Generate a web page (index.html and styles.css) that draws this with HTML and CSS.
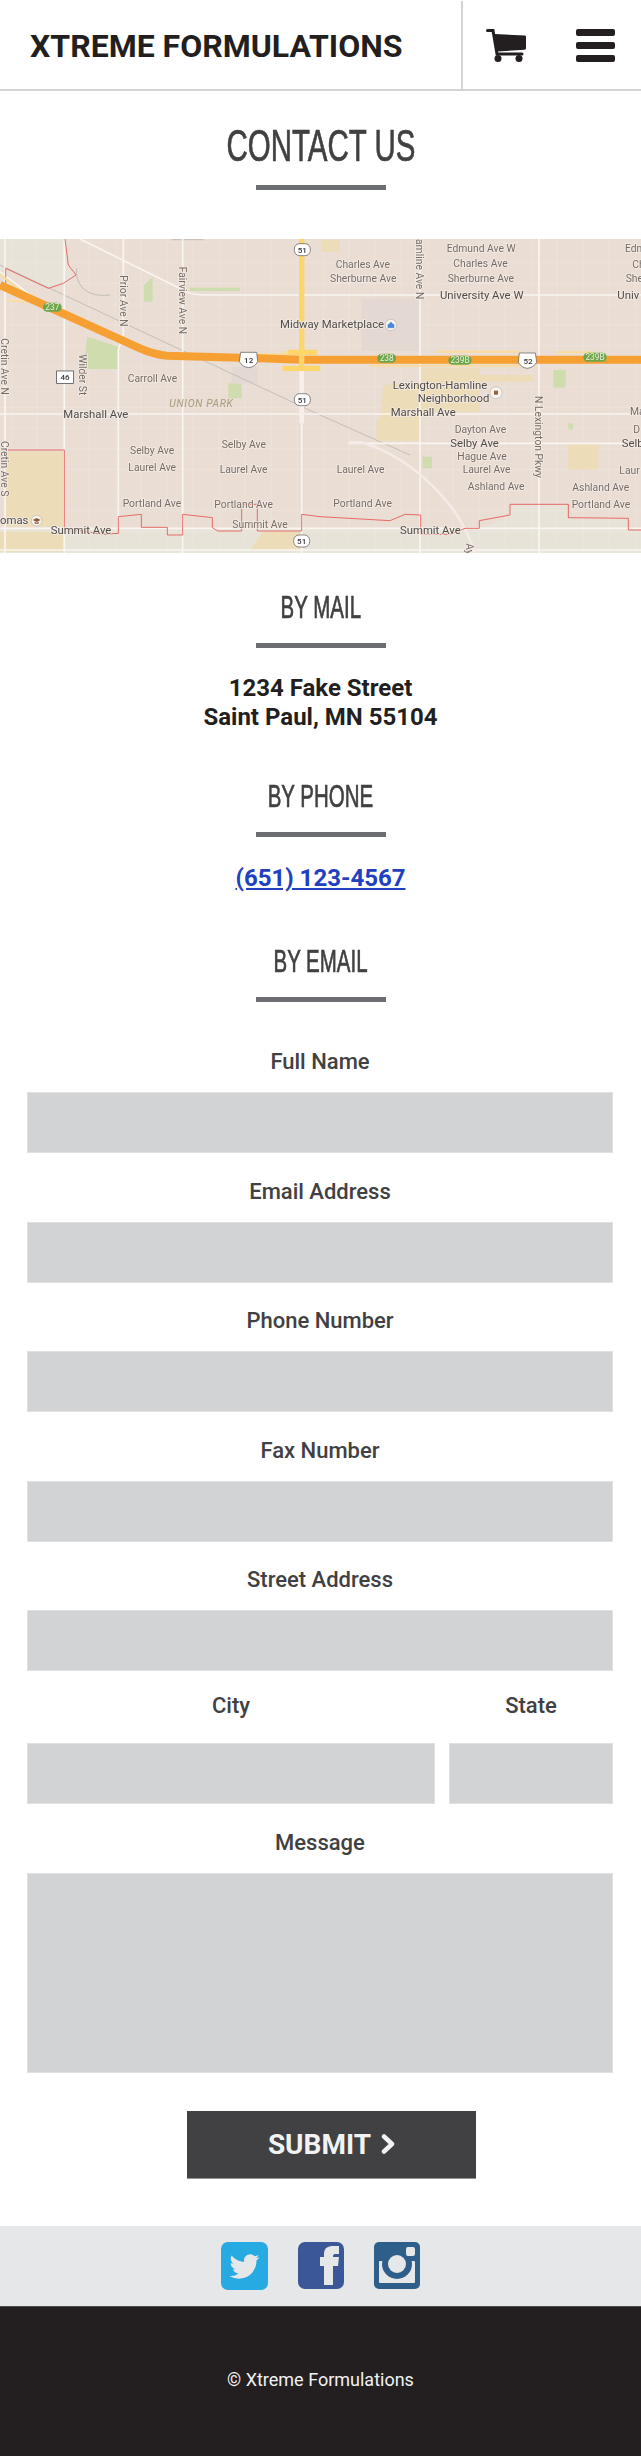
FILE: index.html
```html
<!DOCTYPE html>
<html lang="en">
<head>
    <meta charset="UTF-8">
    <meta name="viewport" content="width=device-width, initial-scale=1.0">
    <title>Contact Us - Xtreme Formulations</title>
    <link rel="stylesheet" href="styles.css">
</head>
<body>
    <header class="site-header">
        <div class="brand">XTREME FORMULATIONS</div>
        <div class="header-icons">
            <svg class="cart-icon" width="40" height="33" viewBox="0 0 40 33">
                <path class="cart-line" d="M1.5 1.5H7L11 25H36"/>
                <path d="M8.5 5L39 6.5Q40 6.5 40 8V19Q40 20.5 38.5 20.7L11.5 22.5Z"/>
                <circle cx="12" cy="29.5" r="3.5"/>
                <circle cx="33" cy="29.5" r="3.5"/>
            </svg>
            <div class="menu-icon"><span></span><span></span><span></span></div>
        </div>
    </header>

    <main>
        <h1 class="page-title"><span>CONTACT US</span></h1>
        <div class="rule"></div>

        <!-- static drawing of the map, coordinates are 3x the screen size -->
        <svg class="map" width="641" height="314" viewBox="0 12 1923 942">
            <defs>
                <pattern id="blocks" width="78" height="62" patternUnits="userSpaceOnUse" patternTransform="translate(32 20)">
                    <path class="block-line" d="M0 0V62M0 0H78"/>
                </pattern>
            </defs>
            <rect class="land" x="0" y="12" width="1923" height="942"/>
            <path class="outside" d="M0 12H195L205 90L228 120L190 145L145 160L17 100L0 110Z"/>
            <path class="outside" d="M0 880H1923V954H0Z"/>
            <path class="outside" d="M1530 808H1705V850L1885 850V885H1440L1530 840Z"/>
            <rect class="grid" x="0" y="12" width="1923" height="942"/>

            <path class="park" d="M262 305L355 335V402H250Z"/>
            <rect class="park" x="685" y="445" width="40" height="45"/>
            <path class="park" d="M432 150L458 125V200H432Z"/>
            <rect class="park" x="570" y="158" width="150" height="10"/>
            <rect class="park" x="1660" y="405" width="37" height="53"/>
            <rect class="park" x="1268" y="665" width="28" height="35"/>
            <rect class="park" x="1705" y="565" width="14" height="18"/>
            <rect class="campus" x="18" y="650" width="172" height="225"/>
            <rect class="campus" x="0" y="890" width="190" height="60"/>
            <rect class="campus" x="1705" y="628" width="90" height="75"/>
            <rect class="campus" x="965" y="15" width="55" height="35"/>
            <path class="campus" d="M750 945L790 890H900V945Z"/>
            <path class="campus" d="M1265 400H1440V440H1600V420H1440V530H1265V618H1130V555H1140L1150 450L1265 440Z"/>
            <rect class="mall" x="1085" y="190" width="175" height="158"/>
            <rect class="mall" x="695" y="395" width="78" height="50"/>

            <path class="rail" d="M0 90L960 540"/>
            <path class="rail" d="M230 100C225 140 250 190 330 180"/>
            <path class="rail" d="M960 540L1230 660"/>
            <path class="rail" d="M515 14H610"/>

            <path class="road" d="M15 12V954M193 12V954M370 12V300L355 345V880M548 12V954M905 400V954M1260 12V954M1617 12V954"/>
            <path class="road" d="M0 537H960M960 537H1923M1045 625H1923M0 880H1923M0 945H1923"/>
            <path class="road" d="M240 12L560 170Q575 180 620 180H1923"/>
            <path class="road" d="M20 195L120 200M0 110L130 210"/>
            <path class="road-wide" d="M905 400V565"/>
            <path class="road-curve" d="M1050 622H1085C1210 660 1370 780 1425 954"/>

            <path class="border-line" d="M195 12L205 90L228 120L190 145L145 160L17 100L17 145"/>
            <path class="border-line" d="M15 645H193V880L310 898L355 895V845L424 838V877H502V900H548V838L637 848V878L653 888H725V808H772V888H905V838L960 845L1170 857L1215 838L1262 840V898H1350L1395 880H1438V857L1530 840V808H1705V848L1885 850V885H1923"/>

            <path class="ramp" d="M0 118L100 195M20 195L130 205M775 358H950M850 352H950M845 400H960M1310 350H1560M1110 392H1560M1670 352H1780"/>
            <path class="freeway" d="M0 150L420 340Q460 358 500 362L720 368L905 374H1923"/>
            <path class="trunk" d="M905 12V400M865 352H950M848 400H960"/>

            <text class="label" x="372" y="121" transform="rotate(90 372 121)" dy="11">Prior Ave N</text>
            <text class="label" x="548" y="95" transform="rotate(90 548 95)" dy="11">Fairview Ave N</text>
            <text class="label" x="13" y="310" transform="rotate(90 13 310)" dy="11">Cretin Ave N</text>
            <text class="label" x="13" y="618" transform="rotate(90 13 618)" dy="11">Cretin Ave S</text>
            <text class="label" x="248" y="358" transform="rotate(90 248 358)" dy="11">Wilder St</text>
            <text class="label" x="1260" y="12" transform="rotate(90 1260 12)" dy="11">amline Ave N</text>
            <text class="label" x="1617" y="483" transform="rotate(90 1617 483)" dy="11">N Lexington Pkwy</text>
            <text class="label" x="1408" y="925" transform="rotate(90 1408 925)" dy="11">Ay</text>

            <text class="label" x="383" y="442">Carroll Ave</text>
            <text class="area" x="508" y="517">UNION PARK</text>
            <text class="label dark" x="190" y="548">Marshall Ave</text>
            <text class="label" x="390" y="657">Selby Ave</text>
            <text class="label" x="665" y="638">Selby Ave</text>
            <text class="label" x="385" y="708">Laurel Ave</text>
            <text class="label" x="659" y="714">Laurel Ave</text>
            <text class="label" x="368" y="817">Portland Ave</text>
            <text class="label" x="643" y="818">Portland Ave</text>
            <text class="label" x="697" y="880">Summit Ave</text>
            <text class="label dark" x="152" y="896">Summit Ave</text>
            <text class="label dark" x="0" y="868">omas</text>
            <text class="label dark" x="840" y="280">Midway</text>

            <text class="label" x="1340" y="51">Edmund Ave W</text>
            <text class="label" x="1875" y="51">Edm</text>
            <text class="label" x="1007" y="98">Charles Ave</text>
            <text class="label" x="1360" y="96">Charles Ave</text>
            <text class="label" x="1897" y="98">Ch</text>
            <text class="label" x="990" y="142">Sherburne Ave</text>
            <text class="label" x="1343" y="140">Sherburne Ave</text>
            <text class="label" x="1877" y="142">She</text>
            <text class="label dark" x="1320" y="192">University Ave W</text>
            <text class="label dark" x="1852" y="192">Univ</text>
            <text class="label dark" x="965" y="280">Marketplace</text>
            <text class="label dark" x="1178" y="463">Lexington-Hamline</text>
            <text class="label dark" x="1253" y="501">Neighborhood</text>
            <text class="label dark" x="1172" y="543">Marshall Ave</text>
            <text class="label" x="1890" y="540">Ma</text>
            <text class="label" x="1364" y="593">Dayton Ave</text>
            <text class="label" x="1900" y="595">D</text>
            <text class="label dark" x="1351" y="635">Selby Ave</text>
            <text class="label dark" x="1865" y="637">Selb</text>
            <text class="label" x="1372" y="675">Hague Ave</text>
            <text class="label" x="1010" y="713">Laurel Ave</text>
            <text class="label" x="1388" y="713">Laurel Ave</text>
            <text class="label" x="1858" y="716">Laur</text>
            <text class="label" x="1403" y="765">Ashland Ave</text>
            <text class="label" x="1717" y="768">Ashland Ave</text>
            <text class="label" x="1000" y="817">Portland Ave</text>
            <text class="label" x="1715" y="820">Portland Ave</text>
            <text class="label dark" x="1200" y="896">Summit Ave</text>

            <g class="route-51">
                <rect x="883" y="26" width="48" height="36" rx="16"/>
                <rect x="883" y="476" width="48" height="36" rx="16"/>
                <rect x="881" y="900" width="48" height="36" rx="16"/>
            </g>
            <text class="route-text" x="907" y="54">51</text>
            <text class="route-text" x="907" y="504">51</text>
            <text class="route-text" x="905" y="928">51</text>

            <path class="shield" d="M722 352H770L773 380Q765 396 746 398Q727 396 718 380Z"/>
            <text class="route-text" x="746" y="385">12</text>
            <path class="shield" d="M1558 354H1606L1610 382Q1600 398 1582 400Q1564 398 1555 382Z"/>
            <text class="route-text" x="1584" y="387">52</text>
            <rect class="state-route" x="170" y="408" width="50" height="37"/>
            <text class="route-text" x="195" y="436">46</text>

            <g class="exit">
                <rect x="129" y="203" width="56" height="27" rx="13"/>
                <rect x="1132" y="356" width="56" height="27" rx="13"/>
                <rect x="1345" y="362" width="70" height="27" rx="13"/>
                <rect x="1750" y="353" width="70" height="27" rx="13"/>
            </g>
            <text class="exit-text" x="157" y="225">237</text>
            <text class="exit-text" x="1160" y="378">238</text>
            <text class="exit-text" x="1380" y="384">239B</text>
            <text class="exit-text" x="1785" y="375">239B</text>

            <circle class="poi" cx="110" cy="857" r="16"/>
            <path class="poi-school" d="M98 855L110 849L122 855L110 861ZM104 860V866H116V860L110 863Z"/>
            <circle class="poi" cx="1173" cy="270" r="17"/>
            <path class="poi-shop" d="M1164 278V268H1182V278ZM1168 268Q1173 256 1178 268"/>
            <circle class="poi" cx="1488" cy="473" r="18"/>
            <rect class="poi-place" x="1482" y="467" width="12" height="12"/>
        </svg>

        <h2 class="section-title first"><span>BY MAIL</span></h2>
        <div class="rule"></div>
        <p class="contact-info address">1234 Fake Street<br>Saint Paul, MN 55104</p>

        <h2 class="section-title"><span>BY PHONE</span></h2>
        <div class="rule"></div>
        <p class="contact-info phone"><a href="#">(651) 123-4567</a></p>

        <h2 class="section-title"><span>BY EMAIL</span></h2>
        <div class="rule"></div>

        <form class="contact-form" onsubmit="return false">
            <label for="full-name">Full Name</label>
            <input type="text" id="full-name">

            <label for="email">Email Address</label>
            <input type="text" id="email">

            <label for="phone">Phone Number</label>
            <input type="text" id="phone">

            <label for="fax">Fax Number</label>
            <input type="text" id="fax">

            <label for="street">Street Address</label>
            <input type="text" id="street">

            <div class="city-state">
                <div>
                    <label for="city">City</label>
                    <input type="text" id="city">
                </div>
                <div>
                    <label for="state">State</label>
                    <input type="text" id="state">
                </div>
            </div>

            <label for="message">Message</label>
            <textarea id="message"></textarea>

            <button type="submit">SUBMIT
                <svg width="14" height="20" viewBox="0 0 14 20"><path d="M3 2.5L11 10L3 17.5"/></svg>
            </button>
        </form>
    </main>

    <div class="social">
        <svg width="47" height="48" viewBox="0 0 47 48">
            <rect class="twitter-bg" width="47" height="48" rx="7"/>
            <path class="social-glyph" transform="translate(8.5 9.5) scale(1.25)" d="M23.953 4.57a10 10 0 01-2.825.775 4.958 4.958 0 002.163-2.723c-.951.555-2.005.959-3.127 1.184a4.92 4.92 0 00-8.384 4.482C7.69 8.095 4.067 6.13 1.64 3.162a4.822 4.822 0 00-.666 2.475c0 1.71.87 3.213 2.188 4.096a4.904 4.904 0 01-2.228-.616v.06a4.923 4.923 0 003.946 4.827 4.996 4.996 0 01-2.212.085 4.936 4.936 0 004.604 3.417 9.867 9.867 0 01-6.102 2.105c-.39 0-.779-.023-1.17-.067a13.995 13.995 0 007.557 2.209c9.053 0 13.998-7.496 13.998-13.985 0-.21 0-.42-.015-.63A9.935 9.935 0 0024 4.59z"/>
        </svg>
        <svg width="46" height="47" viewBox="0 0 46 47">
            <rect class="facebook-bg" width="46" height="47" rx="7"/>
            <path class="social-glyph" d="M26 43V24H22V15H26V12C26 6 30 4 35 4H41V12H37C35.5 12 35 13 35 14.5V15H41L40 24H35V43Z"/>
        </svg>
        <svg width="46" height="47" viewBox="0 0 46 47">
            <rect class="instagram-bg" width="46" height="47" rx="5"/>
            <rect class="social-glyph" x="5" y="19" width="36" height="22" rx="1"/>
            <rect class="instagram-bg" x="10" y="14" width="26" height="5"/>
            <circle class="instagram-bg" cx="23" cy="22" r="15"/>
            <circle class="social-glyph" cx="23" cy="22" r="9"/>
            <rect class="social-glyph" x="32" y="5" width="9" height="9" rx="2"/>
        </svg>
    </div>

    <footer class="site-footer">&copy; Xtreme Formulations</footer>
</body>
</html>
```

FILE: styles.css
```css
* {
    box-sizing: border-box;
}
body {
    margin: 0;
    background-color: #fff;
    font-family: Roboto, "Liberation Sans", sans-serif;
    color: #231f20;
}

/* header */
.site-header {
    display: flex;
    height: 91px;
    padding-top: 1px;
    border-bottom: 2px solid #d1d3d4;
}
.brand {
    flex: 1;
    padding-left: 30px;
    font-size: 32px;
    font-weight: 700;
    line-height: 90px;
}
.header-icons {
    display: flex;
    align-items: flex-start;
    width: 180px;
    padding: 28px 26px 0 23px;
    border-left: 2px solid #d1d3d4;
    justify-content: space-between;
}
.cart-icon path,
.cart-icon circle {
    fill: #231f20;
}
.cart-icon .cart-line {
    fill: none;
    stroke: #231f20;
    stroke-width: 3;
    stroke-linecap: round;
}
.menu-icon {
    display: flex;
    flex-direction: column;
    gap: 6px;
    width: 39px;
}
.menu-icon span {
    height: 7px;
    background-color: #231f20;
    border-radius: 2px;
}

/* headings */
.page-title,
.section-title {
    margin: 0;
    text-align: center;
    font-family: "Liberation Sans Narrow", "Liberation Sans", sans-serif;
    font-weight: 400;
    color: #414042;
    -webkit-text-stroke: .7px #414042;
}
.page-title span,
.section-title span {
    display: inline-block;
    transform: scaleX(.64);
}
.page-title span {
    transform: scaleX(.67);
}
.page-title {
    margin-top: 27px;
    font-size: 44px;
    line-height: 56px;
}
.section-title {
    margin-top: 44px;
    font-size: 32px;
    line-height: 40px;
}
.section-title.first {
    margin-top: 34px;
}
.rule {
    width: 130px;
    height: 5px;
    margin: 16px auto 0;
    background-color: #6d6e71;
}
.page-title + .rule {
    margin-top: 11px;
}

/* map */
.map {
    display: block;
    margin-top: 49px;
    filter: blur(.4px);
}
.land { fill: #e9ddd4; }
.outside { fill: #e7e3d9; }
.grid { fill: url(#blocks); }
.block-line { fill: none; stroke: #f0e8e2; stroke-width: 2.5; }
.park { fill: #cfdcae; }
.campus { fill: #ecdcb8; }
.mall { fill: #e3d8d2; }
.rail { fill: none; stroke: #c4beb9; stroke-width: 3; }
.road { fill: none; stroke: #f9f5f1; stroke-width: 5; }
.road-wide { fill: none; stroke: #f9efea; stroke-width: 14; }
.road-curve { fill: none; stroke: #f4ebe6; stroke-width: 8; }
.border-line { fill: none; stroke: #e4534f; stroke-width: 2.5; }
.ramp { fill: none; stroke: #fbdc9c; stroke-width: 6; }
.freeway { fill: none; stroke: #f6a034; stroke-width: 24; }
.trunk { fill: none; stroke: #fdd569; stroke-width: 16; }
.label {
    font-size: 31px;
    fill: #766c65;
    stroke: #f3ebe5;
    stroke-width: 5px;
    paint-order: stroke;
}
.label.dark {
    font-size: 34px;
    fill: #4f4b47;
}
.area {
    font-size: 31px;
    font-style: italic;
    letter-spacing: 2px;
    fill: #a69c7d;
}
.route-51 rect,
.shield {
    fill: #fff;
    stroke: #55524f;
    stroke-width: 2;
}
.state-route {
    fill: #fff;
    stroke: #333;
    stroke-width: 2;
}
.route-text {
    font-size: 24px;
    font-weight: 500;
    text-anchor: middle;
    fill: #333;
}
.exit rect { fill: #6ea54a; }
.exit-text {
    font-size: 25px;
    text-anchor: middle;
    fill: #e8f0dc;
}
.poi { fill: #f7f3ef; stroke: #bdb3aa; stroke-width: 2; }
.poi-school { fill: #8d5b36; }
.poi-shop { fill: #4d86d8; stroke: #4d86d8; stroke-width: 2; }
.poi-place { fill: #9a5f35; }

/* contact details */
.contact-info {
    margin: 0;
    text-align: center;
    font-size: 24px;
    font-weight: 700;
    line-height: 29px;
}
.address {
    margin-top: 26px;
}
.phone {
    margin-top: 27px;
}
.phone a {
    color: #2040bf;
}
.phone + .section-title {
    margin-top: 48px;
}

/* form */
.contact-form {
    display: flex;
    flex-direction: column;
    padding: 45px 28px 0 27px;
}
label {
    display: block;
    margin-top: 23.5px;
    margin-bottom: 15px;
    text-align: center;
    font-size: 22px;
    font-weight: 500;
    line-height: 30px;
    color: #414042;
}
.contact-form > label:first-child {
    margin-top: 0;
}
input,
textarea {
    display: block;
    width: 100%;
    height: 61px;
    border: 1px solid #e0e1e2;
    border-radius: 0;
    background-color: #d1d3d4;
}
textarea {
    height: 200px;
    resize: none;
}
.city-state {
    display: grid;
    grid-template-columns: 408px 164px;
    gap: 14px;
}
.city-state label {
    margin-top: 20px;
    margin-bottom: 22px;
}
button {
    display: flex;
    align-items: center;
    justify-content: center;
    gap: 10px;
    align-self: flex-start;
    width: 289px;
    height: 68px;
    margin: 38px 0 0 160px;
    border: none;
    border-bottom: 1px solid #939598;
    background-color: #414042;
    color: #f1f2f2;
    font-family: Roboto, sans-serif;
    font-size: 28px;
    font-weight: 700;
}
button svg path {
    fill: none;
    stroke: #f1f2f2;
    stroke-width: 4.5;
    stroke-linecap: round;
    stroke-linejoin: round;
}

/* footer */
.social {
    display: flex;
    justify-content: center;
    gap: 30px;
    height: 80px;
    margin-top: 47px;
    padding-top: 16px;
    background-color: #e6e7e8;
}
.twitter-bg { fill: #27aae1; }
.facebook-bg { fill: #3b5798; }
.instagram-bg { fill: #2e5f8a; }
.social-glyph { fill: #e6e7e8; }
.site-footer {
    height: 150px;
    border-top: 1px solid #4d4d4f;
    background-color: #231f20;
    color: #f1f2f2;
    text-align: center;
    font-size: 18px;
    line-height: 146px;
}
```
